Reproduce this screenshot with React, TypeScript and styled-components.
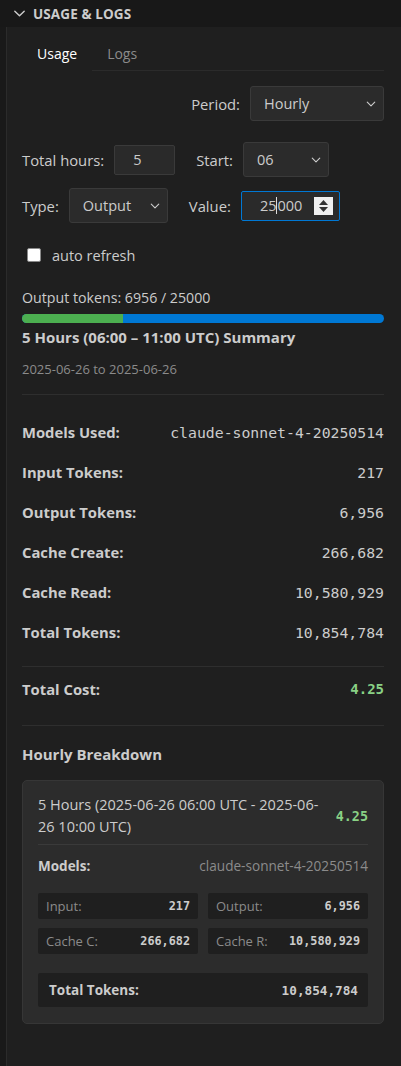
import React from "react";
import styled, { createGlobalStyle } from "styled-components";

const Global = createGlobalStyle`
  html, body { margin: 0; padding: 0; background: #1f1f1f; }
  body { font-family: "Open Sans", "Noto Sans", sans-serif; color: #cccccc; }
  * { box-sizing: border-box; }
`;

const SANS = `"Open Sans", "Noto Sans", sans-serif`;
const MONO = `"DejaVu Sans Mono", "Liberation Mono", monospace`;

const Panel = styled.div`
  width: 401px;
  min-height: 1066px;
  display: flex;
  flex-direction: column;
  background: #1f1f1f;
`;

const Header = styled.div`
  height: 27px;
  background: #181818;
  display: flex;
  align-items: center;
  padding-left: 12px;
  gap: 6px;
  color: #cccccc;
  font: 700 13.5px ${SANS};
  letter-spacing: 0.1px;
`;

const Body = styled.div`
  flex: 1;
  display: flex;
`;

const Gutter = styled.div`
  width: 7px;
  background: #191919;
  border-right: 1px solid #2b2b2b;
`;

const Content = styled.div`
  flex: 1;
  padding: 0 17px 40px 15px;
  display: flex;
  flex-direction: column;
  font-size: 13px;
`;

const TabBar = styled.div`
  margin-top: 11px;
  display: flex;
  height: 33px;
`;

const Tab = styled.div<{ $active?: boolean }>`
  padding: 0 15px;
  line-height: 32px;
  font-size: 14px;
  color: ${(p) => (p.$active ? "#ffffff" : "#8b8b8b")};
  border-bottom: 1px solid ${(p) => (p.$active ? "transparent" : "#2b2b2b")};
`;

const TabFill = styled.div`
  flex: 1;
  border-bottom: 1px solid #2b2b2b;
`;

const Row = styled.div<{ $mt: number; $end?: boolean }>`
  display: flex;
  align-items: center;
  justify-content: ${(p) => (p.$end ? "flex-end" : "flex-start")};
  margin-top: ${(p) => p.$mt}px;
`;

const Field = styled.div<{ $ml?: number }>`
  display: flex;
  align-items: center;
  gap: 10px;
  margin-left: ${(p) => p.$ml ?? 0}px;
`;

const Label = styled.span`
  font-size: 14.8px;
  color: #cccccc;
`;

const SelectBox = styled.div<{ $w: number }>`
  width: ${(p) => p.$w}px;
  height: 35px;
  background: #2b2b2b;
  border: 1px solid #3a3a3a;
  border-radius: 3px;
  display: flex;
  align-items: center;
  justify-content: space-between;
  padding: 0 6px 0 13px;
  font-size: 14.5px;
  color: #cccccc;
`;

const InputBox = styled.div<{ $w: number; $focus?: boolean }>`
  width: ${(p) => p.$w}px;
  height: 30px;
  background: #2a2a2a;
  border: 1px solid ${(p) => (p.$focus ? "#0078d4" : "#3a3a3a")};
  border-radius: 2px;
  display: flex;
  align-items: center;
  justify-content: space-between;
  padding: 0 6px 0 18px;
  font-size: 14.5px;
  color: #cccccc;
`;

const Caret = styled.span`
  display: inline-block;
  width: 1px;
  height: 17px;
  background: #dddddd;
  vertical-align: -3px;
`;

const Spinner = styled.div`
  width: 19px;
  height: 18px;
  background: #f0f0f0;
  display: flex;
  align-items: center;
  justify-content: center;
`;

const CheckRow = styled.label`
  display: flex;
  align-items: center;
  gap: 11px;
  margin: 22px 0 0 5px;
  height: 20px;
  font-size: 14.5px;
  color: #cccccc;
`;

const CheckSquare = styled.span`
  width: 14px;
  height: 14px;
  background: #ffffff;
  border: 1px solid #8a8a8a;
  border-radius: 2px;
`;

const Text = styled.div<{ $mt: number }>`
  margin-top: ${(p) => p.$mt}px;
  line-height: 20px;
  font-size: 14.2px;
  color: #cccccc;
`;

const Bar = styled.div`
  margin-top: 6px;
  height: 9px;
  border-radius: 5px;
  background: #0078d4;
  overflow: hidden;
  display: flex;
`;

const BarFill = styled.div`
  background: #4caf50;
  height: 100%;
`;

const Heading = styled.div<{ $mt: number }>`
  margin-top: ${(p) => p.$mt}px;
  line-height: 20px;
  font: 700 15px ${SANS};
  color: #cccccc;
`;

const DateText = styled.div`
  margin-top: 13px;
  line-height: 18px;
  font-size: 13px;
  color: #8b8b8b;
`;

const Rule = styled.div<{ $mt: number }>`
  margin-top: ${(p) => p.$mt}px;
  height: 1px;
  background: #2e2e2e;
`;

const Stats = styled.div<{ $mt: number }>`
  margin-top: ${(p) => p.$mt}px;
  display: flex;
  flex-direction: column;
`;

const StatRow = styled.div`
  height: 40px;
  display: flex;
  align-items: center;
  justify-content: space-between;
`;

const StatLabel = styled.span`
  font: 700 14.8px ${SANS};
  color: #cccccc;
`;

const MonoValue = styled.span<{ $size: number; $green?: boolean; $bold?: boolean }>`
  font-family: ${MONO};
  font-size: ${(p) => p.$size}px;
  font-weight: ${(p) => (p.$bold ? 700 : 400)};
  color: ${(p) => (p.$green ? "#89d185" : "#cccccc")};
`;

const Card = styled.div`
  margin-top: 16px;
  background: #2c2c2c;
  border: 1px solid #363636;
  border-radius: 5px;
  padding: 13px 15px 16px;
  display: flex;
  flex-direction: column;
`;

const CardHead = styled.div`
  display: flex;
  align-items: center;
  justify-content: space-between;
  gap: 12px;
  padding-bottom: 6px;
  border-bottom: 1px solid #3a3a3a;
`;

const CardTitle = styled.div`
  font-size: 14.5px;
  line-height: 22px;
  color: #cccccc;
`;

const ModelsRow = styled.div`
  margin-top: 11px;
  display: flex;
  justify-content: space-between;
  align-items: center;
  line-height: 20px;
`;

const SmallBold = styled.span`
  font: 700 13.5px ${SANS};
  color: #cccccc;
`;

const ModelName = styled.span`
  font-size: 13.6px;
  color: #8b8b8b;
`;

const Grid = styled.div`
  margin-top: 17px;
  display: grid;
  grid-template-columns: 1fr 1fr;
  column-gap: 10px;
  row-gap: 9px;
`;

const Cell = styled.div`
  height: 26px;
  background: #1f1f1f;
  border-radius: 2px;
  display: flex;
  align-items: center;
  justify-content: space-between;
  padding: 0 8px;
`;

const CellLabel = styled.span`
  font-size: 13px;
  color: #8b8b8b;
`;

const TotalCell = styled.div`
  margin-top: 19px;
  height: 34px;
  background: #1f1f1f;
  border-radius: 2px;
  display: flex;
  align-items: center;
  justify-content: space-between;
  padding: 0 10px 0 11px;
`;

const Chevron = ({ size = 12, color = "#cccccc" }: { size?: number; color?: string }) => (
  <svg width={size} height={size} viewBox="0 0 16 16" fill="none">
    <path d="M3 5.5l5 5 5-5" stroke={color} strokeWidth="1.5" strokeLinecap="round" strokeLinejoin="round" />
  </svg>
);

const SpinIcon = () => (
  <svg width="11" height="14" viewBox="0 0 11 14">
    <path d="M5.5 1L10 6H1z" fill="#333" />
    <path d="M5.5 13L10 8H1z" fill="#333" />
  </svg>
);

const stats: [string, string][] = [
  ["Models Used:", "claude-sonnet-4-20250514"],
  ["Input Tokens:", "217"],
  ["Output Tokens:", "6,956"],
  ["Cache Create:", "266,682"],
  ["Cache Read:", "10,580,929"],
  ["Total Tokens:", "10,854,784"],
];

const cells: [string, string][] = [
  ["Input:", "217"],
  ["Output:", "6,956"],
  ["Cache C:", "266,682"],
  ["Cache R:", "10,580,929"],
];

export default function App() {
  const used = 6956;
  const limit = 25000;
  return (
    <>
      <Global />
      <Panel>
        <Header>
          <Chevron size={15} />
          USAGE &amp; LOGS
        </Header>
        <Body>
          <Gutter />
          <Content>
            <TabBar>
              <Tab $active>Usage</Tab>
              <Tab>Logs</Tab>
              <TabFill />
            </TabBar>

            <Row $mt={15} $end>
              <Field>
                <Label>Period:</Label>
                <SelectBox $w={134}>
                  Hourly
                  <Chevron />
                </SelectBox>
              </Field>
            </Row>

            <Row $mt={21}>
              <Field>
                <Label>Total hours:</Label>
                <InputBox $w={61}>5</InputBox>
              </Field>
              <Field $ml={21}>
                <Label>Start:</Label>
                <SelectBox $w={86}>
                  06
                  <Chevron />
                </SelectBox>
              </Field>
            </Row>

            <Row $mt={11}>
              <Field>
                <Label>Type:</Label>
                <SelectBox $w={99}>
                  Output
                  <Chevron />
                </SelectBox>
              </Field>
              <Field $ml={21}>
                <Label>Value:</Label>
                <InputBox $w={99} $focus>
                  <span>
                    25
                    <Caret />
                    000
                  </span>
                  <Spinner>
                    <SpinIcon />
                  </Spinner>
                </InputBox>
              </Field>
            </Row>

            <CheckRow>
              <CheckSquare />
              auto refresh
            </CheckRow>

            <Text $mt={23}>
              Output tokens: {used} / {limit}
            </Text>
            <Bar>
              <BarFill style={{ width: `${(used / limit) * 100}%` }} />
            </Bar>
            <Heading $mt={4}>5 Hours (06:00 – 11:00 UTC) Summary</Heading>
            <DateText>2025-06-26 to 2025-06-26</DateText>

            <Rule $mt={16} />

            <Stats $mt={17}>
              {stats.map(([l, v]) => (
                <StatRow key={l}>
                  <StatLabel>{l}</StatLabel>
                  <MonoValue $size={14.8}>{v}</MonoValue>
                </StatRow>
              ))}
            </Stats>

            <Rule $mt={14} />
            <Stats $mt={2}>
              <StatRow>
                <StatLabel>Total Cost:</StatLabel>
                <MonoValue $size={14} $green $bold>
                  4.25
                </MonoValue>
              </StatRow>
            </Stats>
            <Rule $mt={16} />

            <Heading $mt={18}>Hourly Breakdown</Heading>

            <Card>
              <CardHead>
                <CardTitle>5 Hours (2025-06-26 06:00 UTC - 2025-06-26 10:00 UTC)</CardTitle>
                <MonoValue $size={13.4} $green $bold>
                  4.25
                </MonoValue>
              </CardHead>
              <ModelsRow>
                <SmallBold>Models:</SmallBold>
                <ModelName>claude-sonnet-4-20250514</ModelName>
              </ModelsRow>
              <Grid>
                {cells.map(([l, v]) => (
                  <Cell key={l}>
                    <CellLabel>{l}</CellLabel>
                    <MonoValue $size={11.8} $bold>
                      {v}
                    </MonoValue>
                  </Cell>
                ))}
              </Grid>
              <TotalCell>
                <SmallBold>Total Tokens:</SmallBold>
                <MonoValue $size={12.7} $bold>
                  10,854,784
                </MonoValue>
              </TotalCell>
            </Card>
          </Content>
        </Body>
      </Panel>
    </>
  );
}
